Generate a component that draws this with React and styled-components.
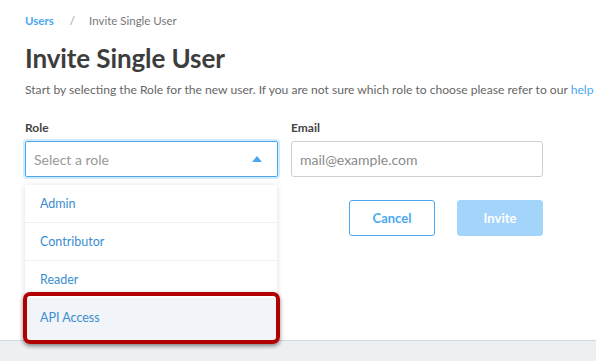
import React from 'react';
import styled, { createGlobalStyle } from 'styled-components';

const roles = ['Admin', 'Contributor', 'Reader', 'API Access'];

const App = () => {
  return (
    <>
      <GlobalStyle />
      <Page>
        <Main>
          <Breadcrumb>
            <Crumb href="#">Users</Crumb>
            <Slash>/</Slash>
            <Current>Invite Single User</Current>
          </Breadcrumb>
          <Title>Invite Single User</Title>
          <Description>
            Start by selecting the Role for the new user. If you are not sure which role to choose please refer to our{' '}
            <Link href="#">help article</Link>
          </Description>

          <Form>
            <Field>
              <Label>Role</Label>
              <SelectBox>
                <Placeholder>Select a role</Placeholder>
                <Caret />
              </SelectBox>
              <Menu>
                {roles.map((role, i) => (
                  <MenuItem key={role} hovered={i === roles.length - 1}>
                    {role}
                    {i === roles.length - 1 && <Highlight />}
                  </MenuItem>
                ))}
              </Menu>
            </Field>

            <Field>
              <Label>Email</Label>
              <Input placeholder="mail@example.com" />
              <Actions>
                <Button>Cancel</Button>
                <Button primary disabled>Invite</Button>
              </Actions>
            </Field>
          </Form>
        </Main>
        <Footer />
      </Page>
    </>
  );
};

export default App;

// Styles
const GlobalStyle = createGlobalStyle`
  html, body {
    margin: 0;
    padding: 0;
    background: #fff;
    font-family: 'Lato', 'Liberation Sans', sans-serif;
    overflow: hidden;
  }
`;

const Page = styled.div`
  width: 596px;
  height: 361px;
  display: flex;
  flex-direction: column;
  overflow: hidden;
`;

const Main = styled.div`
  position: relative;
  z-index: 1;
  flex: 1;
  padding: 12px 0 0 25px;
  white-space: nowrap;
`;

const Breadcrumb = styled.div`
  display: flex;
  align-items: center;
  height: 16px;
  font-size: 11.5px;
`;

const Crumb = styled.a`
  color: #4aa8f0;
  font-weight: 700;
  text-decoration: none;
`;

const Slash = styled.span`
  color: #9a9a9a;
  margin: 0 14px 0 16px;
`;

const Current = styled.span`
  color: #777;
`;

const Title = styled.h1`
  margin: 14px 0 0;
  font-size: 26px;
  line-height: 32px;
  font-weight: 700;
  color: #3d3d3d;
  letter-spacing: -0.1px;
`;

const Description = styled.p`
  margin: 8px 0 0;
  font-size: 12.1px;
  line-height: 16px;
  color: #666;
`;

const Link = styled.a`
  color: #4aa8f0;
  text-decoration: none;
`;

const Form = styled.div`
  display: grid;
  grid-template-columns: 253px 252px;
  column-gap: 13px;
  margin-top: 22px;
`;

const Field = styled.div`
  position: relative;
  display: flex;
  flex-direction: column;
`;

const Label = styled.label`
  font-size: 12px;
  line-height: 15px;
  font-weight: 700;
  color: #444;
  margin-bottom: 6px;
`;

const SelectBox = styled.div`
  box-sizing: border-box;
  height: 36px;
  border: 1px solid #4aa8f0;
  border-radius: 2px;
  box-shadow: 0 0 0 2px #d3eafc;
  display: flex;
  align-items: center;
  justify-content: space-between;
  padding: 0 15px 0 8px;
`;

const Placeholder = styled.span`
  font-size: 14px;
  color: #999;
`;

const Caret = styled.span`
  width: 0;
  height: 0;
  border-left: 5px solid transparent;
  border-right: 5px solid transparent;
  border-bottom: 6px solid #4aa8f0;
`;

const Menu = styled.div`
  position: absolute;
  top: 65px;
  left: 0;
  width: 252px;
  background: #fff;
  border-radius: 3px;
  box-shadow: 0 1px 6px rgba(0, 0, 0, 0.14);
`;

const MenuItem = styled.div`
  position: relative;
  height: 37px;
  line-height: 37px;
  padding-left: 15px;
  font-size: 12.5px;
  color: #3b8dd0;
  background: ${({ hovered }) => (hovered ? '#f1f4f8' : '#fff')};
  border-top: 1px solid #eef0f2;

  &:first-child {
    border-top: none;
    border-radius: 3px 3px 0 0;
  }

  &:last-child {
    height: 42px;
  }
`;

const Highlight = styled.span`
  position: absolute;
  top: -7px;
  left: -2px;
  right: -3px;
  bottom: -3px;
  border: 4px solid #b10000;
  border-radius: 7px;
  box-shadow: 0 2px 4px rgba(0, 0, 0, 0.45);
  pointer-events: none;
`;

const Input = styled.input`
  box-sizing: border-box;
  height: 36px;
  border: 1px solid #cfcfcf;
  border-radius: 3px;
  padding: 0 8px;
  font-family: 'Lato', 'Liberation Sans', sans-serif;
  font-size: 14px;
  color: #333;
  outline: none;

  &::placeholder {
    color: #8a8a8a;
  }
`;

const Actions = styled.div`
  display: flex;
  justify-content: flex-end;
  gap: 22px;
  margin-top: 23px;
`;

const Button = styled.button`
  box-sizing: border-box;
  width: 86px;
  height: 36px;
  border-radius: 3px;
  font-family: 'Lato', 'Liberation Sans', sans-serif;
  font-size: 13px;
  font-weight: 700;
  border: 1px solid ${({ primary }) => (primary ? '#a3d4fa' : '#4aa8f0')};
  background: ${({ primary }) => (primary ? '#a3d4fa' : '#fff')};
  color: ${({ primary }) => (primary ? '#fff' : '#4aa8f0')};
`;

const Footer = styled.div`
  height: 20px;
  flex-shrink: 0;
  border-top: 1px solid #d3d8dd;
  background: #edf0f3;
`;
